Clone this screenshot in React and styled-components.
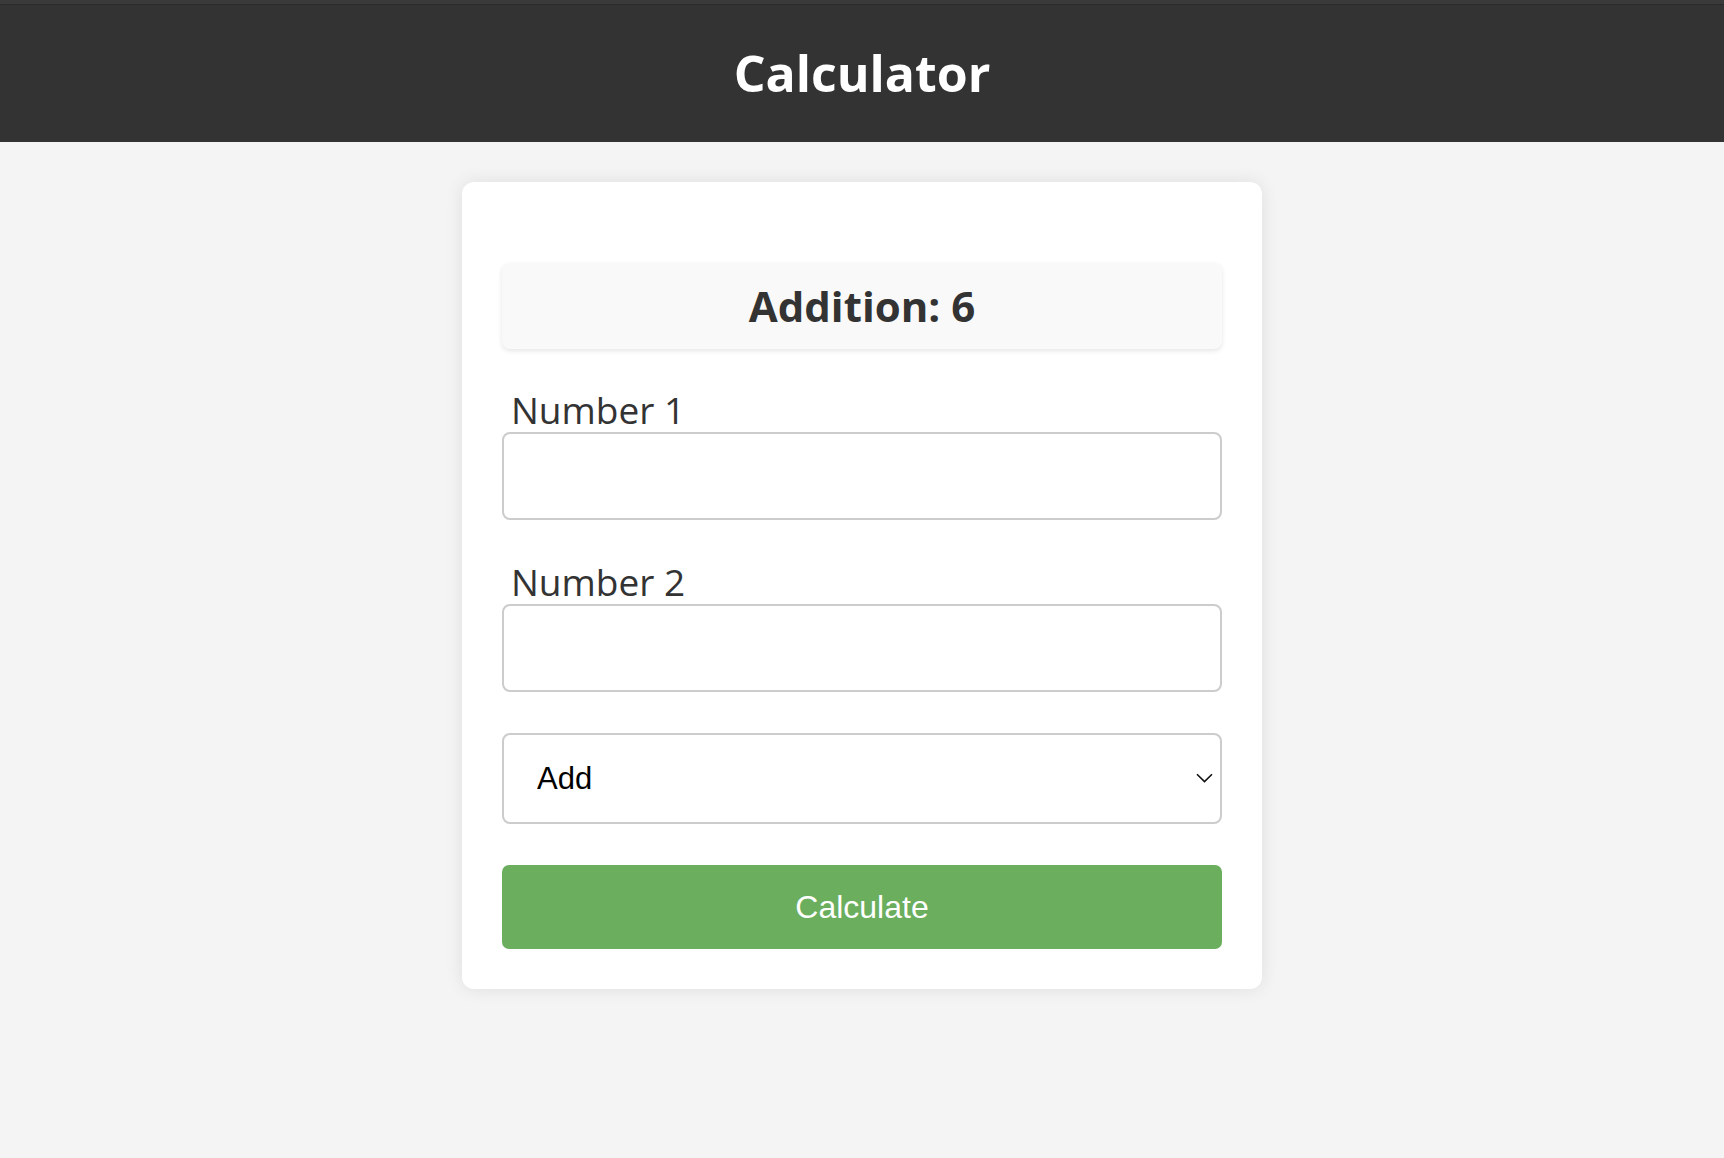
import React, { useState } from 'react';
import styled, { createGlobalStyle } from 'styled-components';

const GlobalStyle = createGlobalStyle`
	body {
		margin: 0;
		background: #f4f4f4;
		font-family: 'Open Sans', 'DejaVu Sans', sans-serif;
		color: #333;
	}
`;

const Header = styled.header`
	box-sizing: border-box;
	height: 142px;
	padding-top: 4px;
	display: flex;
	align-items: center;
	justify-content: center;
	background: linear-gradient(#3a3a3a 0 4px, #2a2a2a 4px 5px, #333 5px);
`;

const Title = styled.h1`
	margin: 0;
	font-size: 50px;
	font-weight: 700;
	line-height: 1;
	color: #fff;
`;

const Main = styled.main`
	padding: 40px 0;
`;

const Card = styled.div`
	box-sizing: border-box;
	width: 800px;
	margin: 0 auto;
	padding: 40px;
	background: #fff;
	border-radius: 12px;
	box-shadow: 0 0 18px rgba(0, 0, 0, 0.09);
	display: flex;
	flex-direction: column;
`;

const Result = styled.div`
	margin-top: 41px;
	padding: 15px;
	line-height: 56px;
	font-size: 42px;
	font-weight: 700;
	text-align: center;
	color: #333;
	background: #f9f9f9;
	border-radius: 8px;
	box-shadow: 0 2px 5px rgba(0, 0, 0, 0.1);
`;

const Field = styled.div`
	display: flex;
	flex-direction: column;
	margin-top: ${props => props.gap}px;
`;

const Label = styled.label`
	display: block;
	padding-left: 9px;
	font-size: 37px;
	line-height: 44px;
	color: #333;
`;

const Input = styled.input`
	box-sizing: border-box;
	width: 100%;
	height: 88px;
	padding: 0 20px;
	border: 2px solid #ccc;
	border-radius: 8px;
	font-size: 31px;
	font-family: 'Liberation Sans', Arial, sans-serif;
	outline: none;
`;

const SelectWrap = styled.div`
	position: relative;
	margin-top: 41px;
`;

const Select = styled.select`
	box-sizing: border-box;
	width: 100%;
	height: 91px;
	padding: 0 40px 0 33px;
	border: 2px solid #ccc;
	border-radius: 8px;
	background: #fff;
	appearance: none;
	font-size: 31px;
	font-family: 'Liberation Sans', Arial, sans-serif;
	color: #000;
	outline: none;
`;

const Chevron = styled.svg`
	position: absolute;
	right: 9px;
	top: 40px;
	pointer-events: none;
`;

const Button = styled.button`
	margin-top: 41px;
	height: 84px;
	border: none;
	border-radius: 7px;
	background: #6aae5e;
	color: #fff;
	font-size: 32px;
	font-family: 'Liberation Sans', Arial, sans-serif;
	cursor: pointer;
`;

const names = {
	add: 'Addition',
	subtract: 'Subtraction',
	multiply: 'Multiplication',
	divide: 'Division',
};

export default function App() {
	const [num1, setNum1] = useState('');
	const [num2, setNum2] = useState('');
	const [op, setOp] = useState('add');
	const [result, setResult] = useState('Addition: 6');

	const calculate = () => {
		const a = parseFloat(num1);
		const b = parseFloat(num2);
		if (isNaN(a) || isNaN(b)) return;
		let value;
		if (op === 'add') value = a + b;
		else if (op === 'subtract') value = a - b;
		else if (op === 'multiply') value = a * b;
		else value = b === 0 ? 'Error' : a / b;
		setResult(`${names[op]}: ${value}`);
	};

	return (
		<>
			<GlobalStyle />
			<Header>
				<Title>Calculator</Title>
			</Header>
			<Main>
				<Card>
					<Result>{result}</Result>
					<Field gap={39}>
						<Label htmlFor="num1">Number 1</Label>
						<Input
							id="num1"
							type="number"
							value={num1}
							onChange={e => setNum1(e.target.value)}
						/>
					</Field>
					<Field gap={40}>
						<Label htmlFor="num2">Number 2</Label>
						<Input
							id="num2"
							type="number"
							value={num2}
							onChange={e => setNum2(e.target.value)}
						/>
					</Field>
					<SelectWrap>
						<Select value={op} onChange={e => setOp(e.target.value)}>
							<option value="add">Add</option>
							<option value="subtract">Subtract</option>
							<option value="multiply">Multiply</option>
							<option value="divide">Divide</option>
						</Select>
						<Chevron width="17" height="10" viewBox="0 0 17 10">
							<path d="M1 1.2 L8.5 8.6 L16 1.2" fill="none" stroke="#111" strokeWidth="1.6" />
						</Chevron>
					</SelectWrap>
					<Button onClick={calculate}>Calculate</Button>
				</Card>
			</Main>
		</>
	);
}
